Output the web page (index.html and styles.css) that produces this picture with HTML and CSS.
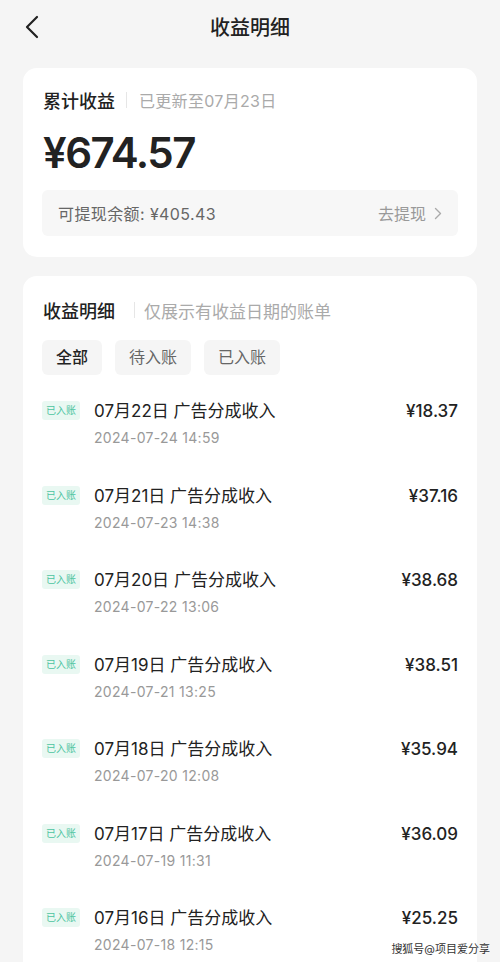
FILE: index.html
```html
<!DOCTYPE html>
<html lang="zh-CN">
<head>
    <meta charset="UTF-8">
    <meta name="viewport" content="width=device-width, initial-scale=1.0">
    <title>收益明细</title>
    <link rel="stylesheet" href="styles.css">
</head>
<body>
    <header class="topbar">
        <span class="back">
            <svg width="14" height="24" viewBox="0 0 14 24"><path d="M12 2 L2 12 L12 22" fill="none" stroke="#222" stroke-width="2.2" stroke-linecap="round" stroke-linejoin="round"/></svg>
        </span>
        <h1>收益明细</h1>
    </header>

    <div class="card summary">
        <div class="card-title">
            <span class="name">累计收益</span>
            <span class="sep"></span>
            <span class="hint">已更新至07月23日</span>
        </div>
        <div class="total">¥674.57</div>
        <div class="balance">
            <span class="available">可提现余额: ¥405.43</span>
            <span class="withdraw">去提现
                <svg width="8" height="13" viewBox="0 0 8 13"><path d="M1.5 1.5 L6.5 6.5 L1.5 11.5" fill="none" stroke="#aaa" stroke-width="1.4" stroke-linecap="round" stroke-linejoin="round"/></svg>
            </span>
        </div>
    </div>

    <div class="card detail">
        <div class="card-title">
            <span class="name">收益明细</span>
            <span class="sep"></span>
            <span class="hint">仅展示有收益日期的账单</span>
        </div>
        <div class="tabs">
            <span class="tab active">全部</span>
            <span class="tab">待入账</span>
            <span class="tab">已入账</span>
        </div>

        <ul class="records">
            <li class="record">
                <span class="badge">已入账</span>
                <div class="info">
                    <div class="line"><span>07月22日 广告分成收入</span><span class="amount">¥18.37</span></div>
                    <div class="time">2024-07-24 14:59</div>
                </div>
            </li>
            <li class="record">
                <span class="badge">已入账</span>
                <div class="info">
                    <div class="line"><span>07月21日 广告分成收入</span><span class="amount">¥37.16</span></div>
                    <div class="time">2024-07-23 14:38</div>
                </div>
            </li>
            <li class="record">
                <span class="badge">已入账</span>
                <div class="info">
                    <div class="line"><span>07月20日 广告分成收入</span><span class="amount">¥38.68</span></div>
                    <div class="time">2024-07-22 13:06</div>
                </div>
            </li>
            <li class="record">
                <span class="badge">已入账</span>
                <div class="info">
                    <div class="line"><span>07月19日 广告分成收入</span><span class="amount">¥38.51</span></div>
                    <div class="time">2024-07-21 13:25</div>
                </div>
            </li>
            <li class="record">
                <span class="badge">已入账</span>
                <div class="info">
                    <div class="line"><span>07月18日 广告分成收入</span><span class="amount">¥35.94</span></div>
                    <div class="time">2024-07-20 12:08</div>
                </div>
            </li>
            <li class="record">
                <span class="badge">已入账</span>
                <div class="info">
                    <div class="line"><span>07月17日 广告分成收入</span><span class="amount">¥36.09</span></div>
                    <div class="time">2024-07-19 11:31</div>
                </div>
            </li>
            <li class="record">
                <span class="badge">已入账</span>
                <div class="info">
                    <div class="line"><span>07月16日 广告分成收入</span><span class="amount">¥25.25</span></div>
                    <div class="time">2024-07-18 12:15</div>
                </div>
            </li>
        </ul>
    </div>

    <div class="watermark">搜狐号@项目爱分享</div>
</body>
</html>
```

FILE: styles.css
```css
body {
    font-family: Inter, "Noto Sans CJK SC", sans-serif;
    margin: 0;
    padding: 0 23px;
    background-color: #f5f5f5;
    color: #222;
    overflow: hidden;
    height: 962px;
    position: relative;
}
.topbar {
    height: 56px;
    display: flex;
    align-items: center;
    justify-content: center;
    position: relative;
}
.back {
    position: absolute;
    left: 2px;
    top: 15px;
    display: flex;
}
.topbar h1 {
    margin: 0;
    font-size: 20px;
    font-weight: 500;
    line-height: 28px;
}
.card {
    background-color: #fff;
    border-radius: 14px;
    margin-top: 12px;
    padding: 20px 19px 21px 19px;
}
.card-title {
    display: flex;
    align-items: center;
    height: 24px;
    padding-left: 1px;
}
.card-title .name {
    font-size: 18px;
    font-weight: 500;
    color: #222;
}
.card-title .sep {
    width: 1px;
    height: 16px;
    background-color: #e6e6e6;
    margin: 0 12px 0 11px;
}
.card-title .hint {
    font-size: 16px;
    color: #aaa;
    letter-spacing: 0.3px;
}
.detail .card-title .sep {
    margin: 0 9px 0 19px;
}
.detail .card-title .hint {
    font-size: 17px;
    letter-spacing: 0;
}
.total {
    font-size: 42px;
    font-weight: 600;
    line-height: 52px;
    margin-top: 15px;
    padding-left: 1px;
    letter-spacing: -1.5px;
}
.balance {
    margin-top: 11px;
    height: 46px;
    background-color: #f7f7f7;
    border-radius: 6px;
    display: flex;
    align-items: center;
    justify-content: space-between;
    padding: 0 16px;
    font-size: 16px;
    color: #666;
}
.available {
    letter-spacing: 0.4px;
}
.withdraw {
    color: #999;
    display: flex;
    align-items: center;
    gap: 8px;
}
.detail {
    margin-top: 19px;
    padding-top: 22px;
}
.tabs {
    display: flex;
    gap: 13px;
    margin-top: 18px;
}
.tab {
    height: 35px;
    line-height: 35px;
    padding: 0 14px;
    background-color: #f5f5f5;
    border-radius: 6px;
    font-size: 16px;
    color: #666;
}
.tab.active {
    color: #222;
    font-weight: 500;
}
.records {
    list-style: none;
    margin: 24px 0 0 0;
    padding: 0;
}
.record {
    display: flex;
    align-items: flex-start;
    height: 84.5px;
}
.badge {
    width: 38px;
    height: 19px;
    margin-top: 2px;
    margin-right: 14px;
    background-color: #e9f8f2;
    color: #4cc4a0;
    font-size: 10px;
    line-height: 19px;
    text-align: center;
    border-radius: 3px;
}
.info {
    flex: 1;
}
.line {
    display: flex;
    justify-content: space-between;
    font-size: 17px;
    line-height: 24px;
    color: #222;
}
.amount {
    font-weight: 500;
}
.time {
    margin-top: 5px;
    font-size: 14px;
    line-height: 20px;
    color: #999;
    letter-spacing: 0.3px;
}
.watermark {
    position: absolute;
    right: 10px;
    bottom: 6px;
    font-size: 11px;
    color: #333;
    text-shadow: 0 0 2px #fff, 0 0 2px #fff;
}
```
